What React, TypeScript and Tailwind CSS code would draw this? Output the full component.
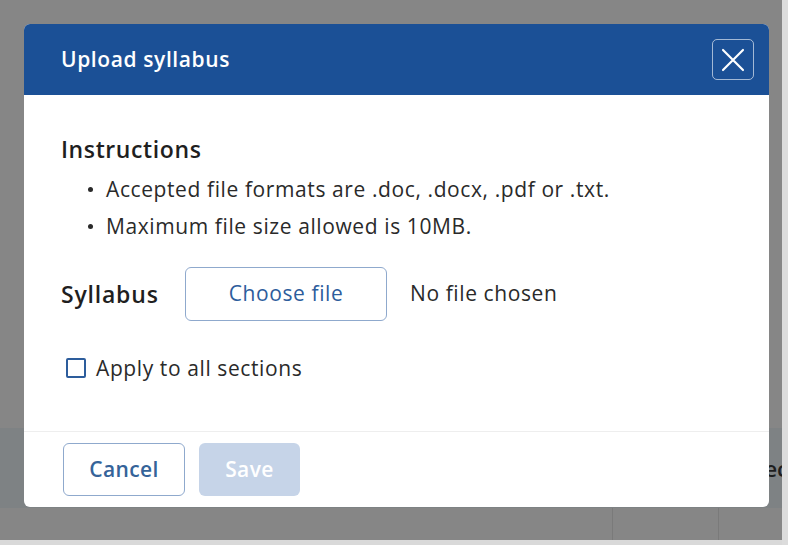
import { useState } from "react";

const CloseIcon = () => (
  <svg viewBox="0 0 24 24" className="h-[30px] w-[30px]" fill="none" stroke="currentColor" strokeWidth={1.7} strokeLinecap="round">
    <path d="M4 4 L20 20 M20 4 L4 20" />
  </svg>
);

const Bullet = ({ children }: { children: React.ReactNode }) => (
  <li className="flex items-center leading-[37px]">
    <span className="ml-[27px] mr-[13px] h-[5px] w-[5px] rounded-full bg-[#2a2a2a]" />
    <span>{children}</span>
  </li>
);

const UploadSyllabusModal = () => {
  const [applyAll, setApplyAll] = useState(false);

  return (
    <div className="absolute left-[24px] top-[24px] flex h-[483px] w-[745px] flex-col overflow-hidden rounded-[6px] bg-white">
      <div className="flex h-[71px] shrink-0 items-center justify-between bg-[#1b5096] pl-[37px] pr-[15px]">
        <h2 className="-mt-[2px] text-[21px] font-semibold leading-[28px] tracking-[0.6px] text-white">Upload syllabus</h2>
        <button
          type="button"
          className="flex h-[41px] w-[42px] items-center justify-center rounded-[5px] border border-white/60 text-white"
        >
          <CloseIcon />
        </button>
      </div>

      <div className="flex-1 pl-[37px] pt-[40px] text-[21px] tracking-[0.6px] text-[#2a2a2a]">
        <h3 className="text-[23px] font-semibold leading-[28px] tracking-[0.6px] text-[#1f1f1f]">Instructions</h3>
        <ul className="mt-[8px]">
          <Bullet>Accepted file formats are .doc, .docx, .pdf or .txt.</Bullet>
          <Bullet>Maximum file size allowed is 10MB.</Bullet>
        </ul>

        <div className="mt-[22px] flex items-center">
          <span className="w-[124px] text-[23px] font-semibold leading-[28px] tracking-[0.8px] text-[#1f1f1f]">Syllabus</span>
          <button
            type="button"
            className="h-[54px] w-[202px] rounded-[6px] border border-[#8fa9cd] text-[21px] tracking-[0.6px] text-[#2d5d9c]"
          >
            Choose file
          </button>
          <span className="ml-[23px]">No file chosen</span>
        </div>

        <label className="mt-[33px] flex cursor-pointer items-center leading-[28px]">
          <input
            type="checkbox"
            checked={applyAll}
            onChange={(e) => setApplyAll(e.target.checked)}
            className="sr-only"
          />
          <span className="ml-[5px] mr-[10px] h-[20px] w-[20px] rounded-[2px] border-2 border-[#2d5d9c]" />
          Apply to all sections
        </label>
      </div>

      <div className="flex h-[76px] shrink-0 items-start gap-[14px] border-t border-[#eeeeee] pl-[39px] pt-[11px]">
        <button
          type="button"
          className="h-[53px] w-[122px] rounded-[6px] border border-[#8fa9cd] text-[21px] font-semibold tracking-[0.4px] text-[#356399]"
        >
          Cancel
        </button>
        <button
          type="button"
          disabled
          className="h-[53px] w-[101px] rounded-[6px] bg-[#c6d4e8] text-[21px] font-semibold tracking-[0.4px] text-white"
        >
          Save
        </button>
      </div>
    </div>
  );
};

export default function App() {
  return (
    <div className="relative flex h-[545px] w-[788px] overflow-hidden bg-[#868686] font-['Open_Sans',sans-serif]">
      {/* page behind the overlay */}
      <div className="flex w-[782px] flex-col">
        <div className="h-[428px]" />
        <div className="flex h-[80px] items-center justify-end bg-[#7e8284]">
          <span className="-mr-[6px] text-[22px] font-semibold text-[#1e1e1e]">Rec</span>
        </div>
        <div className="flex h-[32px]">
          <div className="w-[612px]" />
          <div className="w-[106px] border-l border-[#7a7a7a]" />
          <div className="flex-1 border-l border-[#7a7a7a]" />
        </div>
        <div className="h-[5px] bg-[#d9d9d9]" />
      </div>
      <div className="w-[6px] bg-[#dcdcdc]" />

      <UploadSyllabusModal />
    </div>
  );
}
